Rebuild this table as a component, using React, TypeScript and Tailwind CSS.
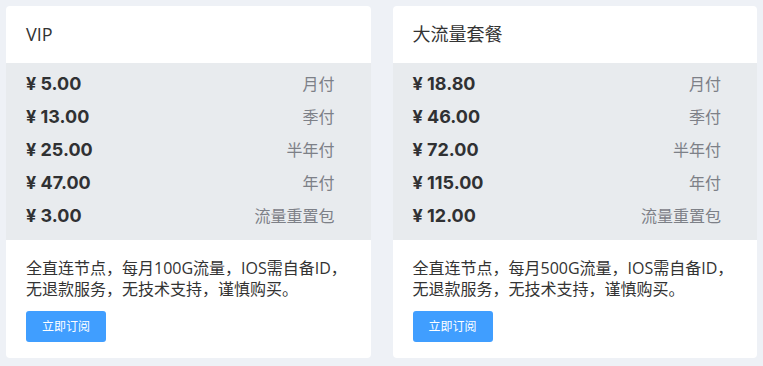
const plans = [
  {
    name: 'VIP',
    prices: [
      ['5.00', '月付'],
      ['13.00', '季付'],
      ['25.00', '半年付'],
      ['47.00', '年付'],
      ['3.00', '流量重置包'],
    ],
    desc: '全直连节点，每月100G流量，IOS需自备ID，无退款服务，无技术支持，谨慎购买。',
  },
  {
    name: '大流量套餐',
    prices: [
      ['18.80', '月付'],
      ['46.00', '季付'],
      ['72.00', '半年付'],
      ['115.00', '年付'],
      ['12.00', '流量重置包'],
    ],
    desc: '全直连节点，每月500G流量，IOS需自备ID，无退款服务，无技术支持，谨慎购买。',
  },
]

function PlanCard({ plan }: { plan: (typeof plans)[number] }) {
  return (
    <div className="flex flex-col overflow-hidden rounded bg-white">
      <div className="flex h-[57px] items-center pl-5 text-[18px] text-[#333]">{plan.name}</div>
      <div className="bg-[#e8ebee] pt-[4px] pb-[8px] pl-5 pr-[36px]">
        {plan.prices.map(([price, label]) => (
          <div key={label} className="flex h-[33px] items-center justify-between">
            <span className="font-['Inter','Noto_Sans_CJK_SC',sans-serif] text-[18px] font-bold text-[#303133]">
              ¥ {price}
            </span>
            <span className="text-[16px] text-[#7d8087]">{label}</span>
          </div>
        ))}
      </div>
      <div className="px-5 pt-[18px] pb-4">
        <p className="text-[16px] leading-[21px] text-[#333]">{plan.desc}</p>
        <button
          type="button"
          className="mt-[11px] h-[31px] w-[80px] rounded-[3px] bg-[#409eff] text-[12px] text-white"
        >
          立即订阅
        </button>
      </div>
    </div>
  )
}

export default function App() {
  return (
    <div
      className="min-h-[366px] bg-[#eef1f6] p-[6px]"
      style={{ fontFamily: '"Open Sans", "Noto Sans CJK SC", sans-serif' }}
    >
      <div className="grid grid-cols-2 gap-[22px]">
        {plans.map((p) => (
          <PlanCard key={p.name} plan={p} />
        ))}
      </div>
    </div>
  )
}
